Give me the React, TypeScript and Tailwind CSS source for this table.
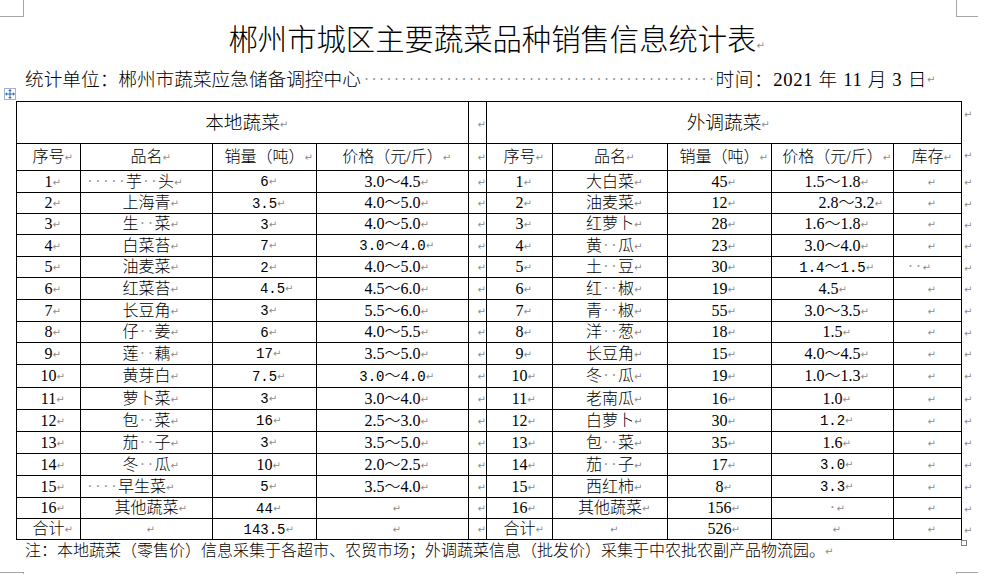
import React from "react";

const Ret = () => (
  <span className="inline-block w-0 whitespace-nowrap font-['DejaVu_Sans',sans-serif] text-[10px] font-normal leading-none text-[#8c8c8c] align-[1px]">
    ↵
  </span>
);

const Dot = () => (
  <span className="inline-block w-[8px] text-center text-[#9a9a9a]">·</span>
);

const monoCls = "font-['Liberation_Mono',monospace] text-[14px]";

function Txt({ s, mono }: { s: string; mono?: boolean }) {
  const chars = Array.from(s);
  return (
    <>
      {chars.map((c, i) =>
        c === "·" ? (
          <Dot key={i} />
        ) : (
          <span key={i} className={mono && c !== "～" ? monoCls : ""}>
            {c}
          </span>
        )
      )}
    </>
  );
}

type Cell = {
  s: string;
  mono?: boolean;
  left?: boolean;
  pre?: string;
  post?: string;
};

type Row = {
  h: string;
  l: Cell[];
  r: Cell[];
};

const c = (s: string, o: Partial<Cell> = {}): Cell => ({ s, ...o });

const rows: Row[] = [
  {
    h: "h-[22px]",
    l: [c("1"), c("·····芋··头", { left: true }), c("6", { mono: true }), c("3.0～4.5")],
    r: [c("1"), c("大白菜"), c("45"), c("1.5～1.8"), c("")],
  },
  {
    h: "h-[21px]",
    l: [c("2"), c("上海青"), c("3.5", { mono: true }), c("4.0～5.0")],
    r: [c("2"), c("油麦菜"), c("12"), c("2.8～3.2", { pre: "w-[28px]" }), c("")],
  },
  {
    h: "h-[21px]",
    l: [c("3"), c("生··菜"), c("3", { mono: true }), c("4.0～5.0")],
    r: [c("3"), c("红萝卜"), c("28"), c("1.6～1.8"), c("")],
  },
  {
    h: "h-[22px]",
    l: [c("4"), c("白菜苔"), c("7", { mono: true }), c("3.0～4.0", { mono: true })],
    r: [c("4"), c("黄··瓜"), c("23"), c("3.0～4.0"), c("")],
  },
  {
    h: "h-[21px]",
    l: [c("5"), c("油麦菜"), c("2", { mono: true }), c("4.0～5.0")],
    r: [c("5"), c("土··豆"), c("30"), c("1.4～1.5", { mono: true }), c("··", { post: "w-[26px]" })],
  },
  {
    h: "h-[22px]",
    l: [c("6"), c("红菜苔"), c("4.5", { mono: true, pre: "w-[16px]" }), c("4.5～6.0")],
    r: [c("6"), c("红··椒"), c("19"), c("4.5", { post: "w-[8px]" }), c("")],
  },
  {
    h: "h-[22px]",
    l: [c("7"), c("长豆角"), c("3", { mono: true }), c("5.5～6.0")],
    r: [c("7"), c("青··椒"), c("55"), c("3.0～3.5"), c("")],
  },
  {
    h: "h-[21px]",
    l: [c("8"), c("仔··姜"), c("6", { mono: true }), c("4.0～5.5")],
    r: [c("8"), c("洋··葱"), c("18"), c("1.5"), c("")],
  },
  {
    h: "h-[22px]",
    l: [c("9"), c("莲··藕"), c("17", { mono: true }), c("3.5～5.0")],
    r: [c("9"), c("长豆角"), c("15"), c("4.0～4.5"), c("")],
  },
  {
    h: "h-[23px]",
    l: [c("10"), c("黄芽白"), c("7.5", { mono: true }), c("3.0～4.0", { mono: true })],
    r: [c("10"), c("冬··瓜"), c("19"), c("1.0～1.3"), c("")],
  },
  {
    h: "h-[22px]",
    l: [c("11"), c("萝卜菜"), c("3", { mono: true }), c("3.0～4.0")],
    r: [c("11"), c("老南瓜"), c("16"), c("1.0"), c("")],
  },
  {
    h: "h-[22px]",
    l: [c("12"), c("包··菜"), c("16", { mono: true }), c("2.5～3.0")],
    r: [c("12"), c("白萝卜"), c("30"), c("1.2", { mono: true }), c("")],
  },
  {
    h: "h-[22px]",
    l: [c("13"), c("茄··子"), c("3", { mono: true }), c("3.5～5.0")],
    r: [c("13"), c("包··菜"), c("35"), c("1.6"), c("")],
  },
  {
    h: "h-[22px]",
    l: [c("14"), c("冬··瓜"), c("10"), c("2.0～2.5")],
    r: [c("14"), c("茄··子"), c("17"), c("3.0", { mono: true }), c("")],
  },
  {
    h: "h-[22px]",
    l: [c("15"), c("····早生菜", { left: true }), c("5", { mono: true }), c("3.5～4.0")],
    r: [c("15"), c("西红柿"), c("8"), c("3.3", { mono: true }), c("")],
  },
  {
    h: "h-[21px]",
    l: [c("16"), c("其他蔬菜"), c("44", { mono: true }), c("")],
    r: [c("16"), c("其他蔬菜"), c("156"), c("·"), c("")],
  },
  {
    h: "h-[21px]",
    l: [c("合计"), c(""), c("143.5", { mono: true }), c("")],
    r: [c("合计"), c(""), c("526"), c(""), c("")],
  },
];

const td = "border border-black p-0 align-middle leading-[18px] whitespace-nowrap";

function DataCell({ cell }: { cell: Cell }) {
  return (
    <td className={`${td} ${cell.left ? "text-left pl-[5px]" : "text-center"}`}>
      {cell.pre && <span className={`inline-block ${cell.pre}`} />}
      <Txt s={cell.s} mono={cell.mono} />
      <Ret />
      {cell.post && <span className={`inline-block ${cell.post}`} />}
    </td>
  );
}

const Outside = () => (
  <td className="border-0 p-0 pl-[2px] align-top text-left leading-[21px]">
    <Ret />
  </td>
);

const MoveIcon = () => (
  <svg width="10" height="10" viewBox="0 0 10 10" fill="none">
    <path d="M5 1.2V8.8M1.2 5H8.8" stroke="#2f62b8" strokeWidth="1" />
    <path d="M5 0L3.2 2H6.8Z M5 10L3.2 8H6.8Z M0 5L2 3.2V6.8Z M10 5L8 3.2V6.8Z" fill="#2f62b8" />
  </svg>
);

export default function App() {
  const dots = "·".repeat(47);
  return (
    <div className="relative w-[985px] h-[574px] overflow-hidden bg-white pt-[22px] text-black font-light font-['Liberation_Serif','Noto_Sans_CJK_SC',serif]">
      {/* crop marks */}
      <div className="absolute left-0 top-0 w-[24px] h-[17px] border-r border-b border-[#a6a6a6]" />
      <div className="absolute left-[956px] top-0 w-[22px] h-[17px] border-l border-b border-[#a6a6a6]" />
      <div className="absolute left-0 top-[572px] w-[24px] h-[10px] border-r border-t border-[#a6a6a6]" />
      <div className="absolute left-[956px] top-[572px] w-[22px] h-[10px] border-l border-t border-[#a6a6a6]" />

      {/* table move handle */}
      <div className="absolute left-[4px] top-[88px] w-[12px] h-[12px] border border-[#9fb2d3] bg-white flex items-center justify-center">
        <MoveIcon />
      </div>
      {/* table resize handle */}
      <div className="absolute left-[961px] top-[540px] w-[6px] h-[6px] border border-[#7f7f7f] bg-white" />

      <div className="h-[37px] text-center text-[29.33px] leading-[37px]">
        郴州市城区主要蔬菜品种销售信息统计表
        <Ret />
      </div>

      <div className="mt-[9px] flex h-[24px] w-[926px] items-center pl-[25px] text-[18.67px] leading-[24px] whitespace-nowrap">
        <span>统计单位：郴州市蔬菜应急储备调控中心</span>
        <span className="ml-[2px] flex-1 font-['Liberation_Mono',monospace] text-[12.5px] text-[#8c8c8c]">
          {dots}
        </span>
        <span className="tracking-[0.65px]">时间：2021 年 11 月 3 日</span>
        <Ret />
      </div>

      <table className="mt-[9px] ml-[16px] w-[957px] table-fixed border-collapse text-[16px]">
        <colgroup>
          <col className="w-[64px]" />
          <col className="w-[132px]" />
          <col className="w-[104px]" />
          <col className="w-[152px]" />
          <col className="w-[18px]" />
          <col className="w-[66px]" />
          <col className="w-[115px]" />
          <col className="w-[104px]" />
          <col className="w-[122px]" />
          <col className="w-[68px]" />
          <col className="w-[12px]" />
        </colgroup>
        <tbody>
          <tr className="h-[42px] text-[18.67px]">
            <td colSpan={4} className={`${td} text-center`}>
              本地蔬菜
              <Ret />
            </td>
            <td className={`${td} text-center`}>
              <Ret />
            </td>
            <td colSpan={5} className={`${td} text-center`}>
              外调蔬菜
              <Ret />
            </td>
            <Outside />
          </tr>
          <tr className="h-[27px]">
            {["序号", "品名", "销量（吨）", "价格（元/斤）", "", "序号", "品名", "销量（吨）", "价格（元/斤）", "库存"].map(
              (h, i) => (
                <td key={i} className={`${td} text-center`}>
                  {h}
                  <Ret />
                </td>
              )
            )}
            <Outside />
          </tr>
          {rows.map((r, i) => (
            <tr key={i} className={r.h}>
              {r.l.map((cell, j) => (
                <DataCell key={`l${j}`} cell={cell} />
              ))}
              <td className={`${td} text-center`}>
                <Ret />
              </td>
              {r.r.map((cell, j) => (
                <DataCell key={`r${j}`} cell={cell} />
              ))}
              <Outside />
            </tr>
          ))}
        </tbody>
      </table>

      <div className="h-[22px] pl-[25px] text-[16px] leading-[22px] whitespace-nowrap">
        注：本地蔬菜（零售价）信息采集于各超市、农贸市场；外调蔬菜信息（批发价）采集于中农批农副产品物流园。
        <Ret />
      </div>
    </div>
  );
}
